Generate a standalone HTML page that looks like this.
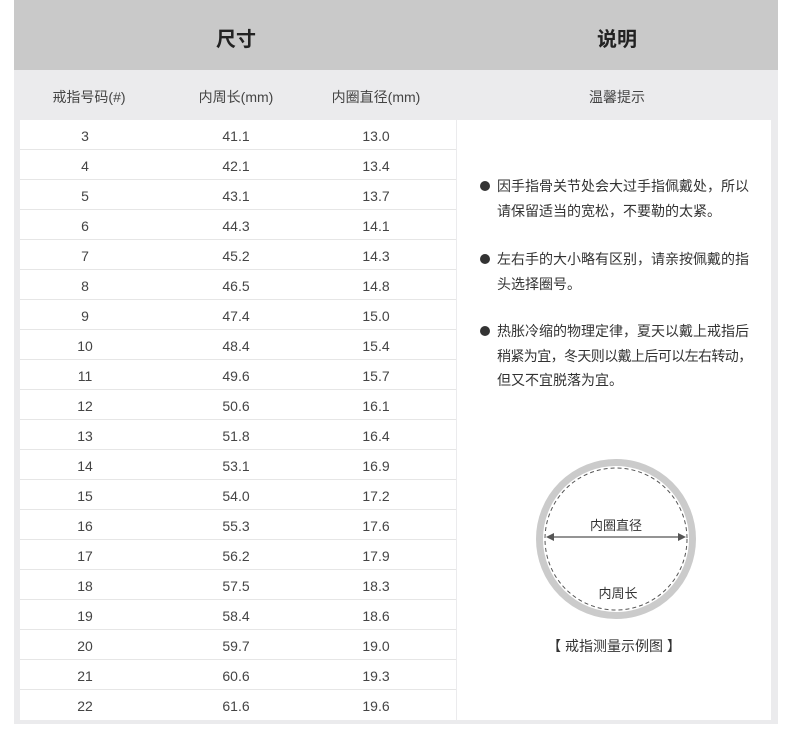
<!DOCTYPE html><html><head><meta charset="utf-8"><style>
*{margin:0;padding:0;box-sizing:border-box}
body{width:790px;height:744px;background:#fff;font-family:"Liberation Sans","Noto Sans CJK SC",sans-serif;color:#333;position:relative;overflow:hidden}
.a{position:absolute}
.wrap{left:14px;top:0;width:764px;height:724px;background:#ebebed}
.hd{left:14px;top:0;width:764px;height:70px;background:#c9c9c9}
.h{top:23px;font-size:20px;font-weight:bold;color:#222;text-align:center;width:200px}
.sh{top:87px;font-size:14px;color:#444;text-align:center;width:200px}
.tbl{left:20px;top:120px;width:436px;height:600px;background:#fff}
.row{position:absolute;left:0;width:436px;height:30px;border-bottom:1px solid #e6e6e6;font-size:14px;color:#444}
.row span{position:absolute;top:8px;width:100px;text-align:center}
.rp{left:457px;top:120px;width:314px;height:600px;background:#fff}
.t{left:480px;font-size:14px;line-height:24.5px;color:#333;width:290px}
.t p{position:relative;padding-left:17px}
.t p:before{content:"";position:absolute;left:0;top:7px;width:10px;height:10px;border-radius:50%;background:#333}
</style></head><body>
<div class="a wrap"></div>
<div class="a hd"></div>
<div class="a h" style="left:136px">尺寸</div>
<div class="a h" style="left:517px">说明</div>
<div class="a sh" style="left:-11px">戒指号码(#)</div>
<div class="a sh" style="left:136px">内周长(mm)</div>
<div class="a sh" style="left:276px">内圈直径(mm)</div>
<div class="a sh" style="left:517px">温馨提示</div>
<div class="a tbl" id="tb">
<div class="row" style="top:0"><span style="left:15px">3</span><span style="left:166px">41.1</span><span style="left:306px">13.0</span></div>
<div class="row" style="top:30px"><span style="left:15px">4</span><span style="left:166px">42.1</span><span style="left:306px">13.4</span></div>
<div class="row" style="top:60px"><span style="left:15px">5</span><span style="left:166px">43.1</span><span style="left:306px">13.7</span></div>
<div class="row" style="top:90px"><span style="left:15px">6</span><span style="left:166px">44.3</span><span style="left:306px">14.1</span></div>
<div class="row" style="top:120px"><span style="left:15px">7</span><span style="left:166px">45.2</span><span style="left:306px">14.3</span></div>
<div class="row" style="top:150px"><span style="left:15px">8</span><span style="left:166px">46.5</span><span style="left:306px">14.8</span></div>
<div class="row" style="top:180px"><span style="left:15px">9</span><span style="left:166px">47.4</span><span style="left:306px">15.0</span></div>
<div class="row" style="top:210px"><span style="left:15px">10</span><span style="left:166px">48.4</span><span style="left:306px">15.4</span></div>
<div class="row" style="top:240px"><span style="left:15px">11</span><span style="left:166px">49.6</span><span style="left:306px">15.7</span></div>
<div class="row" style="top:270px"><span style="left:15px">12</span><span style="left:166px">50.6</span><span style="left:306px">16.1</span></div>
<div class="row" style="top:300px"><span style="left:15px">13</span><span style="left:166px">51.8</span><span style="left:306px">16.4</span></div>
<div class="row" style="top:330px"><span style="left:15px">14</span><span style="left:166px">53.1</span><span style="left:306px">16.9</span></div>
<div class="row" style="top:360px"><span style="left:15px">15</span><span style="left:166px">54.0</span><span style="left:306px">17.2</span></div>
<div class="row" style="top:390px"><span style="left:15px">16</span><span style="left:166px">55.3</span><span style="left:306px">17.6</span></div>
<div class="row" style="top:420px"><span style="left:15px">17</span><span style="left:166px">56.2</span><span style="left:306px">17.9</span></div>
<div class="row" style="top:450px"><span style="left:15px">18</span><span style="left:166px">57.5</span><span style="left:306px">18.3</span></div>
<div class="row" style="top:480px"><span style="left:15px">19</span><span style="left:166px">58.4</span><span style="left:306px">18.6</span></div>
<div class="row" style="top:510px"><span style="left:15px">20</span><span style="left:166px">59.7</span><span style="left:306px">19.0</span></div>
<div class="row" style="top:540px"><span style="left:15px">21</span><span style="left:166px">60.6</span><span style="left:306px">19.3</span></div>
<div class="row" style="top:570px;border:none"><span style="left:15px">22</span><span style="left:166px">61.6</span><span style="left:306px">19.6</span></div>
</div>
<div class="a rp"></div>
<div class="a t" style="top:174px"><p>因手指骨关节处会大过手指佩戴处，所以<br>请保留适当的宽松，不要勒的太紧。</p></div>
<div class="a t" style="top:247px"><p>左右手的大小略有区别，请亲按佩戴的指<br>头选择圈号。</p></div>
<div class="a t" style="top:319px"><p>热胀冷缩的物理定律，夏天以戴上戒指后<br><span style="letter-spacing:-0.6px;white-space:nowrap">稍紧为宜，冬天则以戴上后可以左右转动，</span><br>但又不宜脱落为宜。</p></div>
<svg class="a" style="left:530px;top:455px" width="172" height="172" viewBox="0 0 172 172">
<circle cx="86" cy="84" r="76.5" fill="none" stroke="#cbcbcb" stroke-width="7"/>
<circle cx="86" cy="84" r="71" fill="none" stroke="#555" stroke-width="1" stroke-dasharray="4 3"/>
<line x1="22" y1="82" x2="150" y2="82" stroke="#555" stroke-width="1.2"/>
<polygon points="16,82 24,78 24,86" fill="#555"/><polygon points="156,82 148,78 148,86" fill="#555"/>
<text x="86" y="75" text-anchor="middle" font-size="13" fill="#333" font-family="Liberation Sans,Noto Sans CJK SC,sans-serif">内圈直径</text>
<text x="88" y="143" text-anchor="middle" font-size="13" fill="#333" font-family="Liberation Sans,Noto Sans CJK SC,sans-serif">内周长</text>
</svg>
<div class="a" style="left:514px;top:636px;width:200px;text-align:center;font-size:14px;color:#333">【 戒指测量示例图 】</div>
</body></html>
